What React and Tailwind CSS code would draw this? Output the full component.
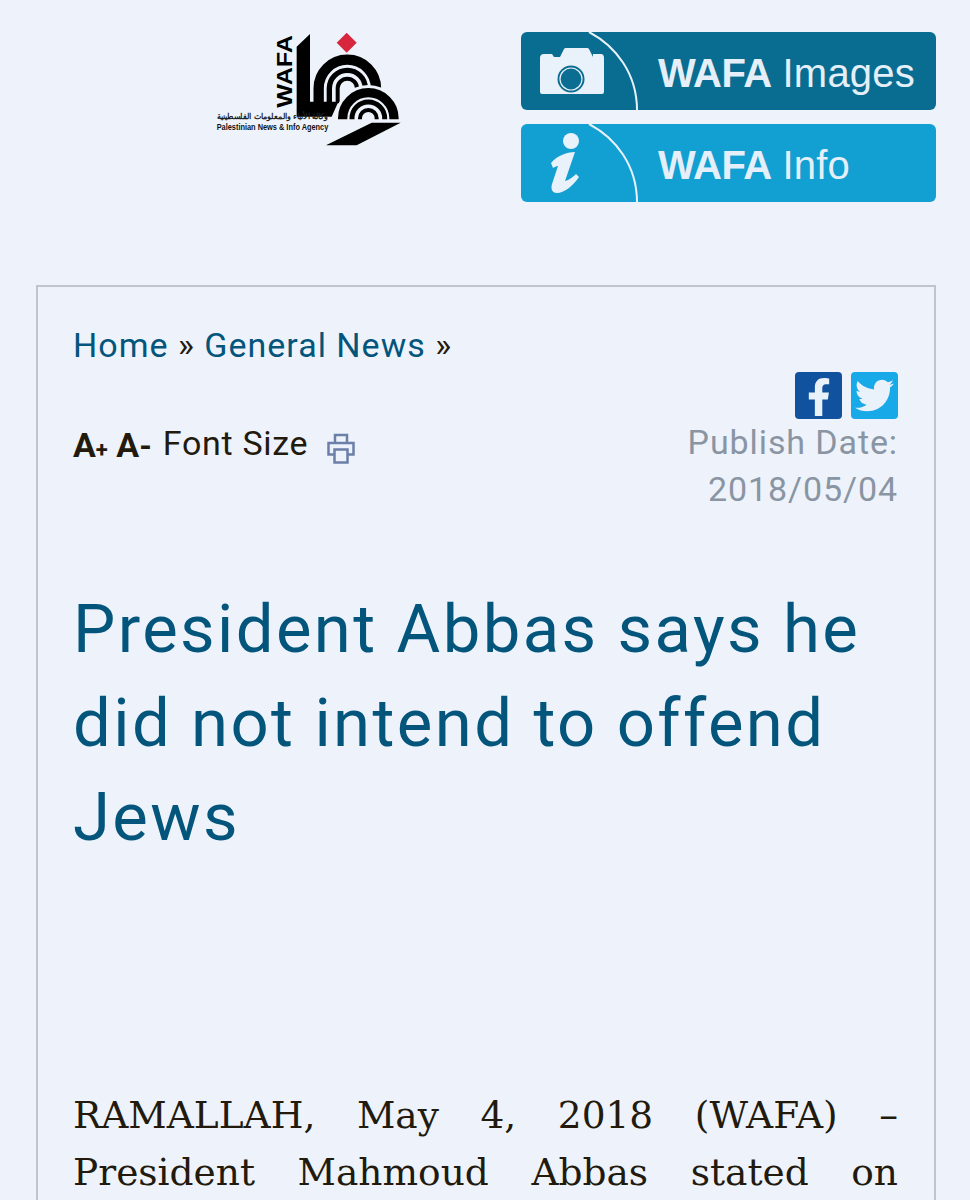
import { FaFacebookF, FaTwitter } from "react-icons/fa";

function WafaLogo() {
  return (
    <svg viewBox="0 0 660 420" className="w-[220px] h-[140px]">
      <polygon points="410,68 440,38 470,68 440,98" fill="#d7263d" />
      <polygon points="290,80 330,42 330,245 415,245 395,290 290,290" fill="#000" />
      <g fill="none" stroke="#000">
        <path d="M356 250 V205 A86 86 0 0 1 528 205 V240" strokeWidth="31" />
        <path d="M388 250 V205 A54 54 0 0 1 496 205 V240" strokeWidth="16" />
        <path d="M413 250 V205 A29 29 0 0 1 471 205 V235" strokeWidth="12" />
      </g>
      <path d="M405 305 V295 A100 100 0 0 1 605 295 V305 Z" fill="#eef3fb" />
      <g fill="none" stroke="#000">
        <path d="M428 298 V295 A77 77 0 0 1 582 295 V298" strokeWidth="28" />
        <path d="M456 298 V295 A49 49 0 0 1 554 295 V298" strokeWidth="15" />
        <path d="M480 298 V295 A25 25 0 0 1 530 295 V298" strokeWidth="12" />
      </g>
      <polygon points="515,308 602,308 470,376 378,376" fill="#000" />
      <text transform="translate(276 263) rotate(-90)" fontFamily="Liberation Sans, sans-serif" fontWeight="700" fontSize="66" textLength="218" lengthAdjust="spacingAndGlyphs" fill="#000">WAFA</text>
      <text x="50" y="297" fontFamily="Noto Sans, sans-serif" fontWeight="700" fontSize="25" textLength="335" lengthAdjust="spacingAndGlyphs" fill="#222">وكالة الأنباء والمعلومات الفلسطينية</text>
      <text x="50" y="331" fontFamily="Liberation Sans, sans-serif" fontWeight="700" fontSize="25" textLength="335" lengthAdjust="spacingAndGlyphs" fill="#111">Palestinian News &amp; Info Agency</text>
    </svg>
  );
}

function CameraIcon() {
  return (
    <g>
      <path d="M19 26 Q19 22 23 22 H31 L33 25 H39 L43 17 Q43.5 16 45 16 H66 Q67.500 16 68 17 L72 25 V22 H80 Q83 22 83 26 V60 Q83 62 81 62 H21 Q19 62 19 60 Z" fill="#e9f1fb" />
      <circle cx="50" cy="47" r="13.500" fill="#0a6d91" />
      <circle cx="50" cy="47" r="11" fill="#0a6d91" stroke="#e9f1fb" strokeWidth="1.200" />
    </g>
  );
}

function InfoIcon() {
  return (
    <g fill="#e9f1fb">
      <circle cx="50" cy="17" r="8" />
      <path d="M30 39 C36 32 45 28 54 28 L44 57 C48 56 52 53 55 50 L58 53 C52 62 43 69 36 69 C30 69 30 63 31 60 L37 42 C35 42 34 43 32 44 Z" />
    </g>
  );
}

function WafaButton({ color, icon, name }) {
  return (
    <div className={`flex items-center h-[78px] rounded-[6px] overflow-hidden ${color}`}>
      <svg viewBox="0 0 118 78" className="w-[118px] h-[78px] shrink-0">
        {icon}
        <path d="M68 0 C95 14 116 42 116 78" fill="none" stroke="#e9f1fb" strokeWidth="2" />
      </svg>
      <div className="ml-[19px] mt-[3px] text-[40px] text-[#e4eff9] font-['Liberation_Sans',sans-serif] leading-none whitespace-nowrap">
        <span className="font-bold tracking-[-0.5px]">WAFA</span>
        <span className="ml-[11px] tracking-[0.2px]">{name}</span>
      </div>
    </div>
  );
}

function PrintIcon() {
  return (
    <svg viewBox="0 0 28 30" className="w-[28px] h-[31px] ml-[19px] mt-[11px]" fill="none" stroke="#6c7fa8" strokeWidth="2.500">
      <path d="M8 9 V1.500 H20 V9" />
      <path d="M7 21 H1.500 V9.500 H26.500 V21 H21" />
      <path d="M7.500 16 H20.500 V29 H7.500 Z" />
    </svg>
  );
}

export default function App() {
  return (
    <div className="w-[970px] h-[1200px] overflow-hidden bg-[#eef3fb] font-['Roboto',sans-serif]">
      {/* header */}
      <div className="flex justify-between pt-[32px] pl-[200px] pr-[34px] h-[285px]">
        <div className="-mt-[12px]">
          <WafaLogo />
        </div>
        <div className="w-[415px] flex flex-col gap-[14px]">
          <WafaButton color="bg-[#096d91]" icon={<CameraIcon />} name="Images" />
          <WafaButton color="bg-[#12a0d2]" icon={<InfoIcon />} name="Info" />
        </div>
      </div>

      {/* article */}
      <div className="ml-[36px] mr-[34px] border-2 border-b-0 border-[#c0c4cb] pl-[35px] pr-[36px] pt-[35px] h-[915px]">
        <div className="text-[34px] leading-[46px] tracking-[1px] text-[#231a0e]">
          <span className="text-[#04557c]">Home</span> » <span className="text-[#04557c]">General News</span> »
        </div>

        <div className="flex justify-between mt-[4px]">
          <div className="flex items-start pt-[50px]">
            <span className="text-[34px] leading-[46px] font-bold text-[#231a0e] whitespace-nowrap">
              A<span className="text-[22px]">+</span> A<span className="text-[32px]">-</span>
            </span>
            <span className="ml-[11px] text-[34px] leading-[42px] tracking-[0.7px] text-[#231a0e]">Font Size</span>
            <PrintIcon />
          </div>
          <div className="flex flex-col items-end">
            <div className="flex gap-[9px]">
              <div className="w-[47px] h-[47px] rounded-[4px] bg-[#11529f] flex items-end justify-center pb-[3px]">
                <FaFacebookF className="text-[#e9f1fb] text-[38px]" />
              </div>
              <div className="w-[47px] h-[47px] rounded-[4px] bg-[#18a9e8] flex items-center justify-center">
                <FaTwitter className="text-[#e9f1fb] text-[39px]" />
              </div>
            </div>
            <div className="text-[34px] leading-[47px] tracking-[0.9px] text-[#8a95a3] text-right">
              Publish Date:
              <br />
              2018/05/04
            </div>
          </div>
        </div>

        <h1 className="mt-[69px] text-[67px] leading-[94px] tracking-[2.4px] font-normal text-[#04557c]">
          President Abbas says he did not intend to offend Jews
        </h1>

        <p className="mt-[223px] text-[37.5px] leading-[57px] text-justify [text-align-last:justify] text-[#231a0e] font-['DejaVu_Serif',serif]">
          RAMALLAH, May 4, 2018 (WAFA) – President Mahmoud Abbas stated on
        </p>
      </div>
    </div>
  );
}
